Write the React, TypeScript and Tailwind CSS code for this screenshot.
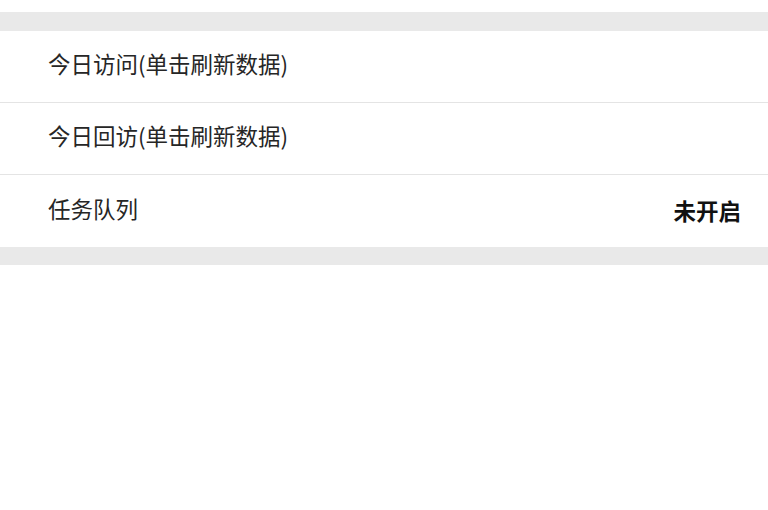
import React from 'react'

const FONT = "font-['Noto_Sans_CJK_SC','Noto_Sans',sans-serif]"

function Row({ label, value, last }: { label: string; value?: string; last?: boolean }) {
  return (
    <div className={`flex h-[72px] items-center justify-between pl-[48px] pr-[27px] ${last ? '' : 'border-b border-[#e4e4e4]'}`}>
      <span className="text-[22.5px] leading-none text-[#262626] -mt-[6px]">{label}</span>
      {value && <span className="text-[22.5px] font-bold leading-none text-[#111] -mt-[1px]">{value}</span>}
    </div>
  )
}

export default function App() {
  return (
    <div className={`${FONT} w-[768px] h-[510px] bg-white`}>
      <div className="h-[12px]" />
      <div className="h-[19px] bg-[#e9e9e9]" />
      <div className="bg-white">
        <Row label="今日访问(单击刷新数据)" />
        <Row label="今日回访(单击刷新数据)" />
        <Row label="任务队列" value="未开启" last />
      </div>
      <div className="h-[18px] bg-[#e9e9e9]" />
    </div>
  )
}
